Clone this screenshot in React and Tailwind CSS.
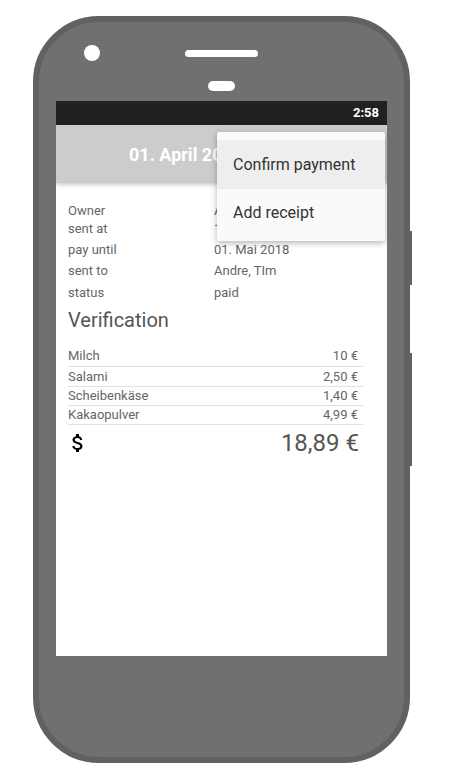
import { MdAttachMoney } from "react-icons/md";

const details = [
  { label: "Owner", value: "Andre", h: "h-[18px]" },
  { label: "sent at", value: "15. April 2018", h: "h-[18px]" },
  { label: "pay until", value: "01. Mai 2018", h: "h-[20px] mt-[2px]" },
  { label: "sent to", value: "Andre, TIm", h: "h-[20px] mt-[1px]" },
  { label: "status", value: "paid", h: "h-[20px] mt-[2px]" },
];

const items = [
  { name: "Milch", price: "10 €", h: "h-[21px]" },
  { name: "Salami", price: "2,50 €", h: "h-[20px]" },
  { name: "Scheibenkäse", price: "1,40 €", h: "h-[19px]" },
  { name: "Kakaopulver", price: "4,99 €", h: "h-[19px]" },
];

function Menu() {
  return (
    <div className="absolute top-[31px] right-[2px] w-[168px] h-[109px] rounded-[2px] bg-[#fafafa] pt-[8px] shadow-[0_2px_6px_rgba(0,0,0,0.3)]">
      <div className="h-[49px] bg-[#eeeeee] flex items-center pl-[16px] text-[16px] text-[#333]">
        Confirm payment
      </div>
      <div className="h-[47px] flex items-center pl-[16px] text-[16px] text-[#333]">
        Add receipt
      </div>
    </div>
  );
}

function Screen() {
  return (
    <div className="relative ml-[17px] mt-[10px] w-[331px] h-[555px] bg-white overflow-hidden">
      <div className="h-[24px] bg-[#212121] flex items-center justify-end pr-[8px]">
        <span className="text-white text-[13px] font-bold">2:58</span>
      </div>
      <div className="h-[58px] bg-[#cccccc] flex items-center pl-[73px] shadow-[0_2px_4px_rgba(0,0,0,0.2)]">
        <span className="text-white text-[18px] font-bold">01. April 2018</span>
      </div>
      <div className="px-[12px] pt-[19px]">
        {details.map((d) => (
          <div key={d.label} className={`${d.h} flex items-center text-[13px] text-[#666]`}>
            <span className="w-[146px]">{d.label}</span>
            <span>{d.value}</span>
          </div>
        ))}
        <div className="mt-[5px] h-[24px] flex items-center text-[20px] text-[#555]">Verification</div>
        <div className="mt-[14px] w-[295px]">
          {items.map((it) => (
            <div
              key={it.name}
              className={`${it.h} flex items-center justify-between border-b border-[#e0e0e0] pr-[5px] text-[13px] text-[#666]`}
            >
              <span>{it.name}</span>
              <span>{it.price}</span>
            </div>
          ))}
          <div className="h-[36px] flex items-center justify-between pr-[4px]">
            <MdAttachMoney className="ml-[-2px] text-black" size={24} />
            <span className="text-[24px] text-[#555]">18,89 €</span>
          </div>
        </div>
      </div>
      <Menu />
    </div>
  );
}

export default function App() {
  return (
    <div className="w-[450px] h-[779px] bg-white font-['Roboto',sans-serif]">
      <div className="flex items-start pl-[33px] pt-[16px]">
        <div className="w-[377px] h-[747px] rounded-[66px] bg-[#707070] border-[6px] border-[#616161]">
          <div className="flex items-start pt-[23px]">
            <div className="ml-[45px] w-[16px] h-[16px] rounded-full bg-white" />
            <div className="ml-[85px] mt-[5px] w-[73px] h-[7px] rounded-full bg-white" />
          </div>
          <div className="mx-auto mt-[20px] w-[27px] h-[10px] rounded-full bg-white" />
          <Screen />
        </div>
        <div className="flex flex-col pt-[215px]">
          <div className="w-[2px] h-[54px] bg-[#616161]" />
          <div className="mt-[68px] w-[2px] h-[113px] bg-[#616161]" />
        </div>
      </div>
    </div>
  );
}
